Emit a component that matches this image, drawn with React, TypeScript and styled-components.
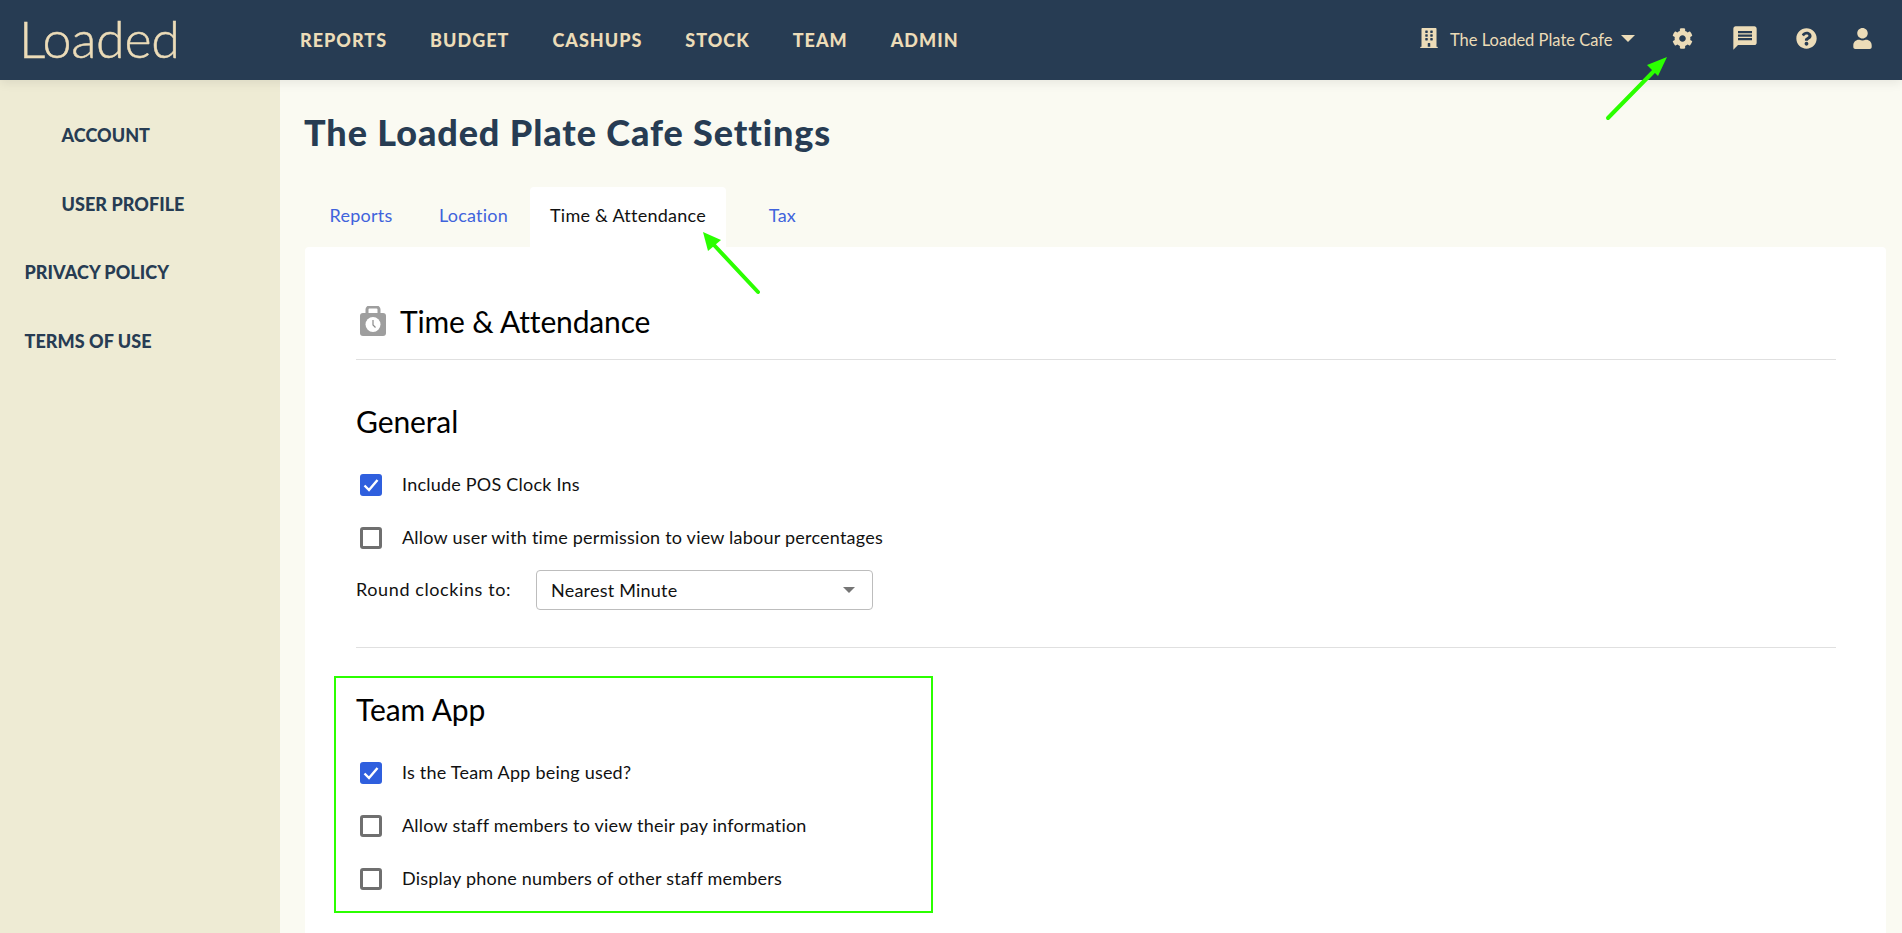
import React from "react";
import styled, { createGlobalStyle } from "styled-components";
import { FaBuilding, FaCog, FaQuestionCircle, FaUser } from "react-icons/fa";
import { MdMessage } from "react-icons/md";

const Global = createGlobalStyle`
  html, body { margin: 0; padding: 0; height: 100%; }
  body { font-family: Lato, "Open Sans", sans-serif; color: #111; overflow: hidden; background: #fafaf2; }
  * { box-sizing: border-box; }
`;

const Page = styled.div`
  position: relative;
  width: 1902px;
  height: 933px;
  overflow: hidden;
  display: flex;
  flex-direction: column;
`;

const Header = styled.header`
  flex: 0 0 80px;
  height: 80px;
  background: #273c53;
  color: #ecdcb8;
  display: flex;
  align-items: center;
  box-shadow: 0 3px 10px rgba(0, 0, 0, 0.08);
  position: relative;
  z-index: 1;
`;

const Logo = styled.div`
  width: 300px;
  padding-left: 19px;
  font-size: 52px;
  font-weight: 300;
  line-height: 1;
  letter-spacing: -0.3px;
  margin-top: -4px;
  -webkit-text-stroke: 0.5px #ecdcb8;
`;

const Nav = styled.nav`
  display: flex;
  gap: 43px;
`;

const NavLink = styled.a`
  font-size: 18px;
  font-weight: 900;
  letter-spacing: 1px;
  line-height: 1;
`;

const HeaderRight = styled.div`
  margin-left: auto;
  display: flex;
  align-items: center;
  height: 100%;
  padding-right: 29px;
`;

const Venue = styled.span`
  font-size: 16.500px;
  margin-left: 11px;
  width: 161px;
  white-space: nowrap;
`;

const Caret = styled.span`
  width: 0;
  height: 0;
  border-left: 7px solid transparent;
  border-right: 7px solid transparent;
  border-top: 7px solid #ecdcb8;
  margin: -4px 37px 0 10px;
`;

const IconSlot = styled.span<{ $gap?: number; $size?: number }>`
  display: inline-flex;
  margin-left: ${(p) => p.$gap ?? 0}px;
  margin-top: -4px;
  font-size: ${(p) => p.$size ?? 21}px;
`;

const Body = styled.div`
  flex: 1;
  display: flex;
  min-height: 0;
`;

const Sidebar = styled.aside`
  flex: 0 0 280px;
  background: #eeebd4;
  padding-top: 44px;
`;

const SideLink = styled.a<{ $nested?: boolean }>`
  display: block;
  height: 22px;
  line-height: 22px;
  margin-bottom: 46.500px;
  padding-left: ${(p) => (p.$nested ? 61.5 : 24.5)}px;
  font-size: 18px;
  font-weight: 900;
  letter-spacing: 0.05px;
  color: #273c53;
`;

const Main = styled.main`
  flex: 1;
  padding: 0 16px 0 25px;
  min-width: 0;
`;

const Title = styled.h1`
  margin: 31px 0 34px -1px;
  font-size: 36px;
  line-height: 42px;
  font-weight: 900;
  color: #273c53;
  letter-spacing: 0.9px;
`;

const Tabs = styled.div`
  display: flex;
  height: 60px;
`;

const Tab = styled.a<{ $active?: boolean; $width?: number }>`
  width: ${(p) => (p.$width ? `${p.$width}px` : "auto")};
  padding: 18px 20px 0;
  height: 60px;
  text-align: center;
  font-size: 18px;
  letter-spacing: 0.25px;
  line-height: 20px;
  white-space: nowrap;
  border-radius: 4px 4px 0 0;
  color: ${(p) => (p.$active ? "#111" : "#3f63dc")};
  background: ${(p) => (p.$active ? "#fff" : "transparent")};
`;

const Panel = styled.section`
  background: #fff;
  border-radius: 4px 4px 0 0;
  padding: 59px 50px 0 51px;
  height: 700px;
`;

const PanelHead = styled.div`
  display: flex;
  align-items: center;
  height: 30px;
  gap: 14px;
  padding-left: 4px;
`;

const PanelTitle = styled.h2`
  margin: -1px 0 0;
  font-size: 30px;
  font-weight: 400;
  letter-spacing: -0.15px;
  line-height: 36px;
  color: #000;
`;

const Rule = styled.hr<{ $top: number }>`
  border: 0;
  height: 1px;
  background: #e0e0e0;
  margin: ${(p) => p.$top}px 0 0;
`;

const SectionTitle = styled.h3<{ $top: number }>`
  margin: ${(p) => p.$top}px 0 34px;
  font-size: 30px;
  font-weight: 400;
  letter-spacing: -0.1px;
  line-height: 36px;
  color: #000;
`;

const Row = styled.div`
  display: flex;
  align-items: center;
  height: 23px;
  margin-bottom: 30px;
  padding-left: 4px;
  font-size: 18px;
  letter-spacing: 0.22px;
`;

const RowText = styled.span`
  margin-top: -2px;
`;

const Box = styled.span<{ $checked?: boolean }>`
  flex: 0 0 22px;
  width: 22px;
  height: 22px;
  border-radius: 3px;
  margin-right: 20px;
  display: inline-flex;
  align-items: center;
  justify-content: center;
  border: ${(p) => (p.$checked ? "0" : "3px solid #6f6f6f")};
  background: ${(p) => (p.$checked ? "#2f5fde" : "#fff")};
`;

const SelectRow = styled.div`
  display: flex;
  align-items: center;
  height: 40px;
  margin-top: -9px;
  font-size: 18px;
  letter-spacing: 0.22px;
`;

const SelectLabel = styled.label`
  width: 180px;
  margin-top: -3px;
  letter-spacing: 0.6px;
`;

const Select = styled.div`
  width: 337px;
  height: 40px;
  border: 1px solid #bdbdbd;
  border-radius: 4px;
  padding: 0 17px 0 14px;
  display: flex;
  align-items: center;
  justify-content: space-between;
`;

const SelectCaret = styled.span`
  width: 0;
  height: 0;
  border-left: 6px solid transparent;
  border-right: 6px solid transparent;
  border-top: 6px solid #757575;
`;

const Highlight = styled.div`
  position: absolute;
  left: 334px;
  top: 676px;
  width: 599px;
  height: 237px;
  border: 2px solid #2bff00;
  pointer-events: none;
`;

const Overlay = styled.svg`
  position: absolute;
  left: 0;
  top: 0;
  z-index: 2;
  pointer-events: none;
`;

const Check = ({ checked }: { checked?: boolean }) => (
  <Box $checked={checked}>
    {checked && (
      <svg width="16" height="14" viewBox="0 0 16 14">
        <path d="M1.5 7.5 L6 12 L14.5 2" fill="none" stroke="#fff" strokeWidth="2.4" />
      </svg>
    )}
  </Box>
);

const TimerIcon = () => (
  <svg width="26" height="30" viewBox="0 0 26 30">
    <path d="M7 9V3.5A2.5 2.5 0 0 1 9.5 1h7A2.5 2.5 0 0 1 19 3.500V9" fill="none" stroke="#9e9e9e" strokeWidth="3" />
    <rect x="0" y="7" width="26" height="23" rx="3" fill="#9e9e9e" />
    <circle cx="13" cy="18.500" r="7.500" fill="#fff" />
    <path d="M13 14v5l2.500 2.500" fill="none" stroke="#8a8a8a" strokeWidth="1.200" />
  </svg>
);

export default function App() {
  return (
    <Page>
      <Global />
      <Header>
        <Logo>Loaded</Logo>
        <Nav>
          {["REPORTS", "BUDGET", "CASHUPS", "STOCK", "TEAM", "ADMIN"].map((n) => (
            <NavLink key={n}>{n}</NavLink>
          ))}
        </Nav>
        <HeaderRight>
          <IconSlot $size={20}><FaBuilding /></IconSlot>
          <Venue>The Loaded Plate Cafe</Venue>
          <Caret />
          <IconSlot><FaCog /></IconSlot>
          <IconSlot $gap={38} $size={28}><MdMessage /></IconSlot>
          <IconSlot $gap={37}><FaQuestionCircle /></IconSlot>
          <IconSlot $gap={35}><FaUser /></IconSlot>
        </HeaderRight>
      </Header>
      <Body>
        <Sidebar>
          <SideLink $nested>ACCOUNT</SideLink>
          <SideLink $nested>USER PROFILE</SideLink>
          <SideLink>PRIVACY POLICY</SideLink>
          <SideLink>TERMS OF USE</SideLink>
        </Sidebar>
        <Main>
          <Title>The Loaded Plate Cafe Settings</Title>
          <Tabs>
            <Tab $width={112}>Reports</Tab>
            <Tab $width={113}>Location</Tab>
            <Tab $active>Time &amp; Attendance</Tab>
            <Tab $width={113}>Tax</Tab>
          </Tabs>
          <Panel>
            <PanelHead>
              <TimerIcon />
              <PanelTitle>Time &amp; Attendance</PanelTitle>
            </PanelHead>
            <Rule $top={23} />
            <SectionTitle $top={43}>General</SectionTitle>
            <Row><Check checked /><RowText>Include POS Clock Ins</RowText></Row>
            <Row><Check /><RowText>Allow user with time permission to view labour percentages</RowText></Row>
            <SelectRow>
              <SelectLabel>Round clockins to:</SelectLabel>
              <Select>Nearest Minute<SelectCaret /></Select>
            </SelectRow>
            <Rule $top={37} />
            <SectionTitle $top={43}>Team App</SectionTitle>
            <Row><Check checked /><RowText>Is the Team App being used?</RowText></Row>
            <Row><Check /><RowText>Allow staff members to view their pay information</RowText></Row>
            <Row><Check /><RowText>Display phone numbers of other staff members</RowText></Row>
          </Panel>
        </Main>
      </Body>
      <Highlight />
      <Overlay width="1902" height="933" viewBox="0 0 1902 933">
        <path d="M1608 118 L1654 71" stroke="#2bff00" strokeWidth="4" strokeLinecap="round" />
        <polygon points="1667,57 1647,65 1658,76" fill="#2bff00" />
        <path d="M758 292 L714 245" stroke="#2bff00" strokeWidth="4" strokeLinecap="round" />
        <polygon points="703,232 721,240 708,251" fill="#2bff00" />
      </Overlay>
    </Page>
  );
}
